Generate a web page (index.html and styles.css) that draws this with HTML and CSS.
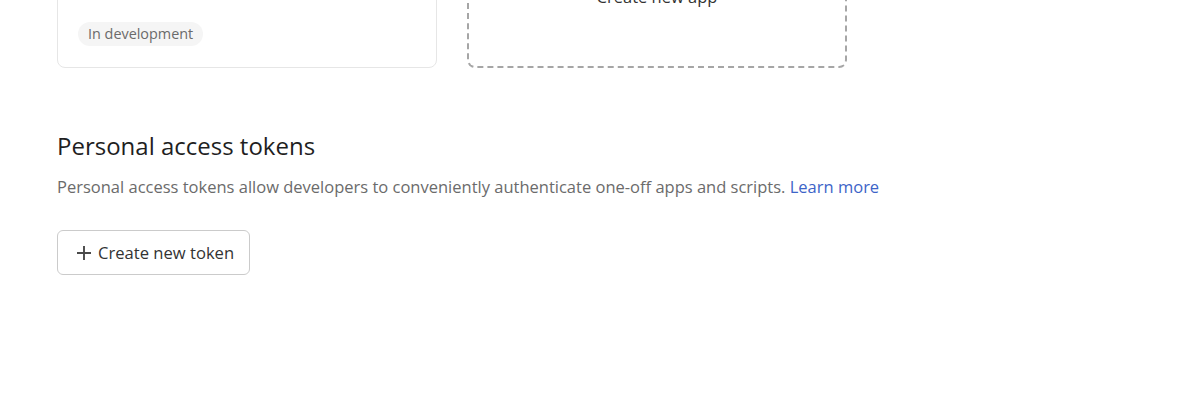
FILE: index.html
```html
<!DOCTYPE html>
<html lang="en">
<head>
<meta charset="utf-8">
<title>Apps</title>
<link rel="stylesheet" href="styles.css">
</head>
<body>
<main class="page">
  <div class="cards">
    <div class="card">
      <div class="card-title">My app</div>
      <span class="badge">In development</span>
    </div>
    <div class="card card-new">
      <svg class="new-icon" width="24" height="24" viewBox="0 0 24 24"><path d="M12 5v14M5 12h14" stroke="#444" stroke-width="2" fill="none" stroke-linecap="round"/></svg>
      <span class="new-label">Create new app</span>
    </div>
  </div>

  <section class="tokens">
    <h2 class="tokens-title">Personal access tokens</h2>
    <p class="tokens-desc">Personal access tokens allow developers to conveniently authenticate one-off apps and scripts. <a class="link" href="#">Learn more</a></p>
    <button class="btn" type="button">
      <svg class="btn-icon" width="16" height="16" viewBox="0 0 16 16"><path d="M8 1v14M1 8h14" stroke="#4a4a4a" stroke-width="1.9" fill="none"/></svg>
      <span>Create new token</span>
    </button>
  </section>
</main>
</body>
</html>
```
FILE: styles.css
```css
* { box-sizing: border-box; }
html, body { margin: 0; background: #fff; }
body {
  font-family: "Open Sans", "Noto Sans", sans-serif;
  color: #1f1f1f;
}
.page { padding-left: 57px; }
.cards {
  display: flex;
  gap: 30px;
  margin-top: -99px;
}
.card {
  width: 380px;
  height: 167px;
  border: 1px solid #e6e6e6;
  border-radius: 8px;
  padding: 20px 20px 21px;
  display: flex;
  flex-direction: column;
  align-items: flex-start;
}
.card-title { font-size: 18px; font-weight: 600; }
.badge {
  margin-top: auto;
  height: 24px;
  line-height: 24px;
  padding: 0 10px;
  border-radius: 12px;
  background: #f5f5f5;
  color: #6b6b6b;
  font-size: 14.4px;
}
.card-new {
  border: 2px dashed #a6a6a6;
  align-items: center;
  justify-content: center;
  gap: 6px;
  padding-top: 14px;
}
.new-label { font-size: 16.5px; color: #333; }
.tokens { padding-top: 62px; }
.tokens-title {
  margin: 0;
  font-size: 24px;
  line-height: 32px;
  font-weight: 500;
  color: #1f1f1f;
}
.tokens-desc {
  margin: 13px 0 0;
  font-size: 16.5px;
  line-height: 24px;
  color: #6b6b6b;
}
.link { color: #3d64c8; text-decoration: none; }
.btn {
  margin-top: 31px;
  height: 45px;
  padding: 0 15px 0 18px;
  display: inline-flex;
  align-items: center;
  gap: 6px;
  border: 1px solid #cbcbcb;
  border-radius: 6px;
  background: #fff;
  font-family: inherit;
  font-size: 16.6px;
  color: #333;
}
.btn-icon { display: block; }
```
